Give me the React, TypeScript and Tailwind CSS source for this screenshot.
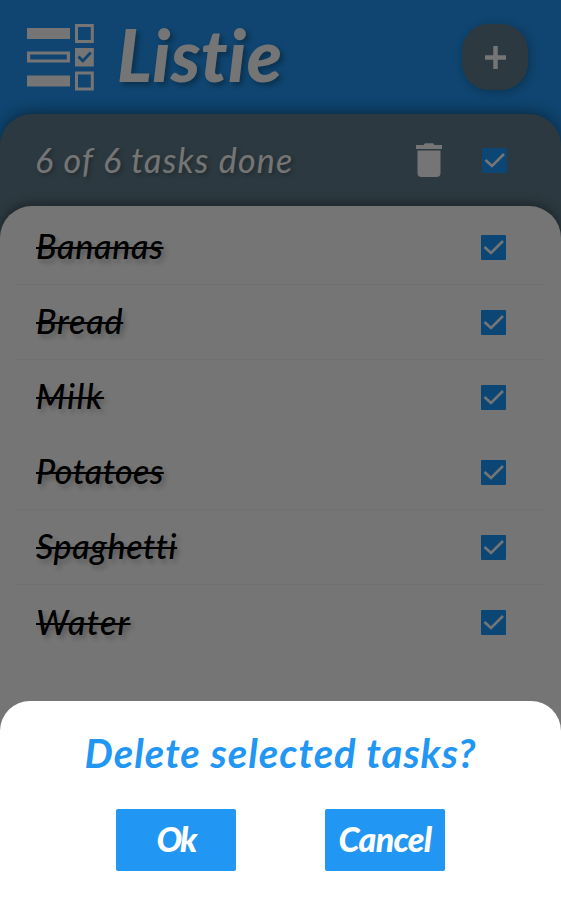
import React, { useState } from 'react';
import clsx from 'clsx';

interface Task {
  id: number;
  name: string;
  done: boolean;
  nameClass: string;
  divider: boolean;
}

const initialTasks: Task[] = [
  { id: 1, name: 'Bananas', done: true, nameClass: 'tracking-[0.7px]', divider: true },
  { id: 2, name: 'Bread', done: true, nameClass: 'tracking-[0.8px]', divider: true },
  { id: 3, name: 'Milk', done: true, nameClass: 'tracking-[1.7px]', divider: false },
  { id: 4, name: 'Potatoes', done: true, nameClass: 'tracking-[0.4px]', divider: true },
  { id: 5, name: 'Spaghetti', done: true, nameClass: 'tracking-[0.6px]', divider: true },
  { id: 6, name: 'Water', done: true, nameClass: 'tracking-[1.3px]', divider: false },
];

const Logo: React.FC = () => (
  <svg width="68" height="68" viewBox="0 0 68 68" fill="none" className="shrink-0 text-white">
    <path fill="currentColor" d="M0 5h43v11H0zM0 52.500h43v11H0z" />
    <path stroke="currentColor" strokeWidth="3.2" d="M1.600 30h39.800v8H1.600z" />
    <path stroke="currentColor" strokeWidth="3" d="M49.500 2.500h15.800v16h-15.800zM49.500 50h15.800v16h-15.800z" />
    <path fill="currentColor" d="M48 25h18.800v18.500H48z" />
    <path stroke="#2196f3" strokeWidth="2.8" d="M51.500 33.500l4.300 4.500 8-8.500" />
  </svg>
);

const CheckBox: React.FC<{ checked: boolean; onToggle: () => void }> = ({ checked, onToggle }) => (
  <button
    type="button"
    role="checkbox"
    aria-checked={checked}
    onClick={onToggle}
    className={clsx('h-[25px] w-[25px] rounded-[1px]', checked ? 'bg-[#1a98ff]' : 'border-2 border-[#607d8b]')}
  >
    {checked && (
      <svg width="25" height="25" viewBox="0 0 25 25" fill="none">
        <path d="M3.5 12l6.500 6L22 6" stroke="#fff" strokeWidth="2.6" />
      </svg>
    )}
  </button>
);

const TrashIcon: React.FC = () => (
  <svg width="26" height="34" viewBox="0 0 26 34" fill="#fff">
    <path d="M0 2h7.500L9 .2h8L18.500 2H26v4H0zM1.500 7.500h23V30q0 4-4 4h-15q-4 0-4-4z" />
  </svg>
);

const App: React.FC = () => {
  const [tasks, setTasks] = useState<Task[]>(initialTasks);
  const [showDialog, setShowDialog] = useState(true);

  const doneCount = tasks.filter((task) => task.done).length;
  const allDone = tasks.length > 0 && doneCount === tasks.length;

  const toggleTask = (id: number) => {
    setTasks(tasks.map((task) => (task.id === id ? { ...task, done: !task.done } : task)));
  };

  const toggleAll = () => {
    setTasks(tasks.map((task) => ({ ...task, done: !allDone })));
  };

  const deleteSelected = () => {
    setTasks(tasks.filter((task) => !task.done));
    setShowDialog(false);
  };

  return (
    <div className="relative h-[900px] w-[561px] overflow-hidden bg-[#2196f3] font-['Lato','Open_Sans',sans-serif] italic">
      <header className="flex h-[114px] items-center pl-[27px] pr-[33px]">
        <Logo />
        <h1 className="ml-[22px] pb-[5px] text-[72px] leading-[109px] font-black tracking-[0.6px] whitespace-nowrap text-white [text-shadow:3px_3px_5px_rgba(0,0,0,0.3)]">
          Listie
        </h1>
        <button
          type="button"
          aria-label="Add task"
          className="ml-auto flex h-[66px] w-[66px] items-center justify-center rounded-[27px] bg-[#607d8b] shadow-[2px_2px_10px_rgba(0,0,0,0.25)]"
        >
          <svg width="21" height="23" viewBox="0 0 21 23">
            <path d="M10.500 0v23M0 11.500h21" stroke="#fff" strokeWidth="4.500" />
          </svg>
        </button>
      </header>

      <main className="h-[786px] rounded-t-[32px] bg-[#607d8b] shadow-[0_-2px_14px_rgba(0,0,0,0.4)]">
        <div className="flex h-[92px] items-center pl-[35px] pr-[54px]">
          <p className="text-[34px] leading-none tracking-[1.2px] whitespace-nowrap text-white [text-shadow:2px_2px_4px_rgba(0,0,0,0.3)]">
            {doneCount} of {tasks.length} tasks done
          </p>
          <button type="button" aria-label="Delete selected" className="ml-auto mr-[40px]" onClick={() => setShowDialog(true)}>
            <TrashIcon />
          </button>
          <CheckBox checked={allDone} onToggle={toggleAll} />
        </div>

        <ul className="h-[694px] rounded-t-[32px] bg-white px-[15px] pt-[4px] shadow-[0_-2px_12px_rgba(0,0,0,0.4)]">
          {tasks.map((task) => (
            <li
              key={task.id}
              className={clsx(
                'flex h-[75.1px] items-center border-b pl-[21px] pr-[40px]',
                task.divider ? 'border-[#f5f5f5]' : 'border-transparent'
              )}
            >
              <span
                className={clsx(
                  'pb-[2px] text-[34px] leading-none font-medium text-black [font-variant-ligatures:none] [text-shadow:3px_4px_5px_rgba(0,0,0,0.22)]',
                  task.nameClass,
                  task.done && 'line-through decoration-2'
                )}
              >
                {task.name}
              </span>
              <span className="ml-auto flex">
                <CheckBox checked={task.done} onToggle={() => toggleTask(task.id)} />
              </span>
            </li>
          ))}
        </ul>
      </main>

      {showDialog && (
        <div className="absolute inset-0 flex flex-col justify-end bg-black/54">
          <div className="h-[199px] rounded-t-[30px] bg-white">
            <h2 className="pt-[30px] text-center text-[40px] leading-[44px] font-bold tracking-[1px] whitespace-nowrap text-[#2196f3]">
              Delete selected tasks?
            </h2>
            <div className="mt-[34px] flex justify-center gap-[89px]">
              <button
                type="button"
                onClick={deleteSelected}
                className="h-[62px] w-[120px] rounded-[2px] bg-[#2196f3] pb-[3px] text-[34px] leading-none font-black tracking-[-2px] text-white"
              >
                Ok
              </button>
              <button
                type="button"
                onClick={() => setShowDialog(false)}
                className="h-[62px] w-[120px] rounded-[2px] bg-[#2196f3] pb-[3px] text-[34px] leading-none font-black tracking-[-0.7px] text-white"
              >
                Cancel
              </button>
            </div>
          </div>
        </div>
      )}
    </div>
  );
};

export default App;
